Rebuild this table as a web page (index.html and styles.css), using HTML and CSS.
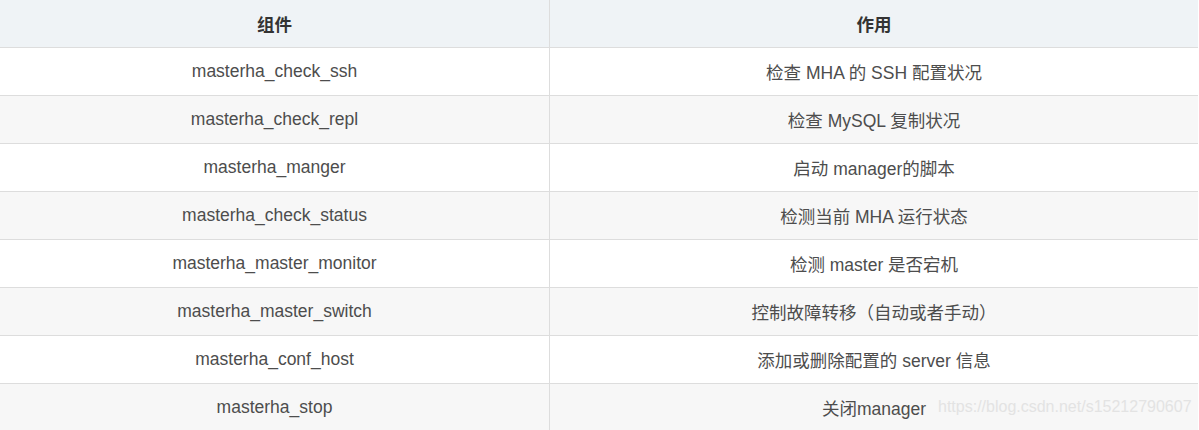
FILE: index.html
```html
<!DOCTYPE html>
<html>
<head>
<meta charset="utf-8">
<link rel="stylesheet" href="styles.css">
</head>
<body>
<div class="wrap">
<table class="tbl">
<thead>
<tr><th>组件</th><th>作用</th></tr>
</thead>
<tbody>
<tr><td>masterha_check_ssh</td><td>检查 MHA 的 SSH 配置状况</td></tr>
<tr><td>masterha_check_repl</td><td>检查 MySQL 复制状况</td></tr>
<tr><td>masterha_manger</td><td>启动 manager的脚本</td></tr>
<tr><td>masterha_check_status</td><td>检测当前 MHA 运行状态</td></tr>
<tr><td>masterha_master_monitor</td><td>检测 master 是否宕机</td></tr>
<tr><td>masterha_master_switch</td><td>控制故障转移（自动或者手动）</td></tr>
<tr><td>masterha_conf_host</td><td>添加或删除配置的 server 信息</td></tr>
<tr><td>masterha_stop</td><td>关闭manager</td></tr>
</tbody>
</table>
<div class="watermark">https://blog.csdn.net/s15212790607</div>
</div>
</body>
</html>
```
FILE: styles.css
```css
html, body {
  margin: 0;
  padding: 0;
  background: #fff;
}
.wrap {
  position: relative;
  width: 1198px;
  height: 430px;
  overflow: hidden;
}
.tbl {
  width: 1198px;
  border-collapse: collapse;
  table-layout: fixed;
  font-family: "Liberation Sans", "Noto Sans CJK SC", sans-serif;
  font-size: 17.5px;
  color: #4d4d4d;
}
.tbl th, .tbl td {
  height: 47px;
  padding: 0;
  text-align: center;
  vertical-align: middle;
  border-bottom: 1px solid #dddddd;
}
.tbl th:first-child, .tbl td:first-child {
  width: 549px;
  border-right: 1px solid #dddddd;
}
.tbl th {
  background: #eff3f6;
  font-weight: bold;
  color: #333;
}
.tbl tbody tr:nth-child(even) td {
  background: #f7f7f7;
}
.watermark {
  position: absolute;
  left: 938px;
  top: 398px;
  font-family: "Liberation Sans", sans-serif;
  font-size: 16px;
  color: #e3e3e3;
  white-space: nowrap;
}
```
